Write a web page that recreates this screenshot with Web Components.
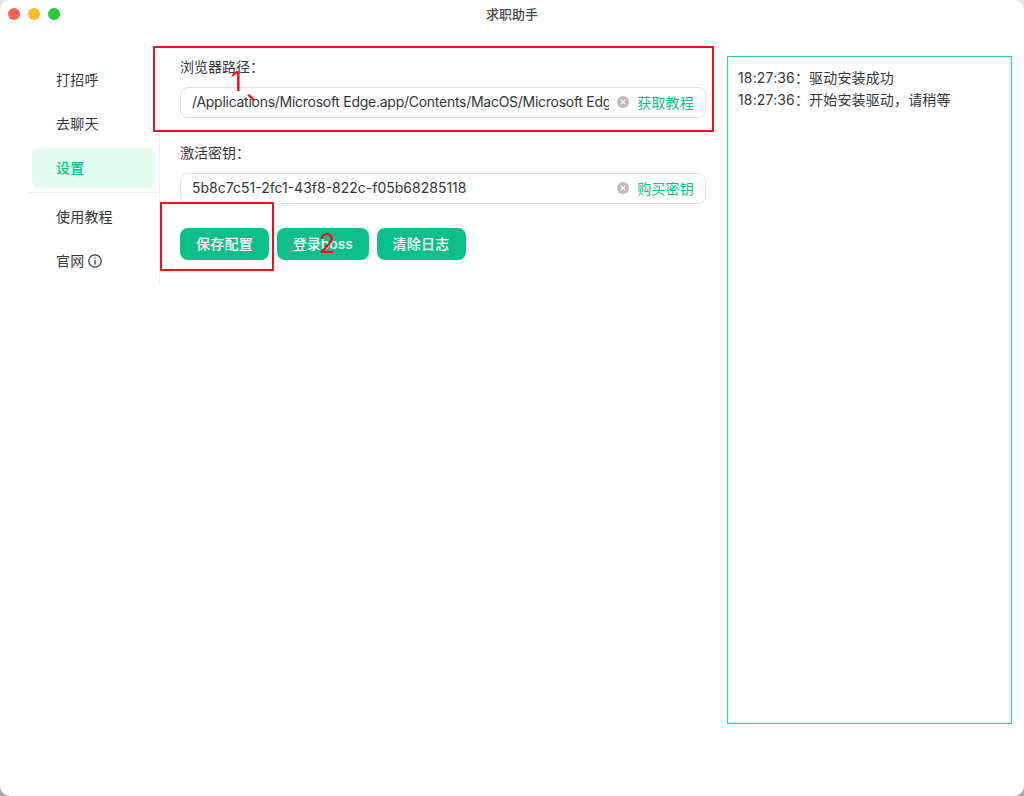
<!DOCTYPE html>
<html lang="zh">
<head>
<meta charset="utf-8">
<title>求职助手</title>
<style>
  html, body {
    margin: 0;
    height: 100%;
    background: linear-gradient(#e4e4e4, #a8a8a8);
    font-family: Inter, "Noto Sans CJK SC", sans-serif;
    font-size: 14px;
    color: #333639;
  }
</style>
</head>
<body>
<app-window>
  <side-menu slot="menu">
    <menu-item>打招呼</menu-item>
    <menu-item>去聊天</menu-item>
    <menu-item active>设置</menu-item>
    <menu-divider></menu-divider>
    <menu-item>使用教程</menu-item>
    <menu-item>官网<info-icon></info-icon></menu-item>
  </side-menu>
  <settings-form slot="content">
    <form-field label="浏览器路径：" action="获取教程" tight>/Applications/Microsoft Edge.app/Contents/MacOS/Microsoft Edge</form-field>
    <form-field label="激活密钥：" action="购买密钥">5b8c7c51-2fc1-43f8-822c-f05b68285118</form-field>
    <button-row>
      <app-button>保存配置</app-button>
      <app-button style="letter-spacing:-.1px">登录boss</app-button>
      <app-button>清除日志</app-button>
    </button-row>
  </settings-form>
  <log-panel slot="log">
    <div>18:27:36：驱动安装成功</div>
    <div>18:27:36：开始安装驱动，请稍等</div>
  </log-panel>
  <note-box slot="notes" style="left:153px;top:46px;width:561px;height:86px"></note-box>
  <note-box slot="notes" style="left:160px;top:202px;width:114px;height:69px"></note-box>
  <note-mark slot="notes" style="left:231px;top:67px">1</note-mark>
  <note-mark slot="notes" style="left:246px;top:76px">、</note-mark>
  <note-mark slot="notes" style="left:319px;top:229px">2</note-mark>
</app-window>

<script>
function define(name, css, html, setup) {
  customElements.define(name, class extends HTMLElement {
    constructor() {
      super();
      this.attachShadow({mode: 'open'});
      this.shadowRoot.innerHTML = `<style>${css}</style>${html}`;
    }
    connectedCallback() {
      if (setup) setup(this);
    }
  });
}

define('app-window', `
  :host {
    display: flex;
    flex-direction: column;
    position: relative;
    height: 796px;
    background: #fff;
    border-radius: 10px;
    overflow: hidden;
  }
  #bar {
    flex: none;
    box-sizing: border-box;
    height: 28px;
    padding-bottom: 1px;
    display: flex;
    align-items: center;
    position: relative;
    justify-content: center;
    font-size: 13px;
    font-weight: 500;
    color: #4a4a4a;
  }
  #lights {
    position: absolute;
    left: 8px;
    top: 8px;
    display: flex;
    gap: 8px;
  }
  #lights i { width: 12px; height: 12px; border-radius: 50%; }
  #main {
    flex: 1;
    display: flex;
    padding: 28px 12px 0 28px;
    min-height: 0;
  }
`, `
  <div id="bar">
    <div id="lights">
      <i style="background:#fe5f57"></i>
      <i style="background:#febc2e"></i>
      <i style="background:#28c83f"></i>
    </div>
    求职助手
  </div>
  <div id="main">
    <slot name="menu"></slot>
    <slot name="content"></slot>
    <slot name="log"></slot>
  </div>
  <slot name="notes"></slot>
`);

define('side-menu', `
  :host {
    flex: none;
    display: flex;
    flex-direction: column;
    box-sizing: border-box;
    width: 132px;
    height: 229px;
    padding: 4px 4px 0;
    border-right: 1px solid #efeff5;
  }
`, `<slot></slot>`);

define('menu-item', `
  :host {
    flex: none;
    display: flex;
    align-items: center;
    gap: 4px;
    box-sizing: border-box;
    height: 40px;
    margin-bottom: 4px;
    padding: 0 0 2px 24px;
    border-radius: 8px;
    font-size: 14px;
    letter-spacing: .2px;
    color: #333639;
  }
  :host([active]) {
    background: #e3fcf0;
    color: #13bd86;
    font-weight: 500;
  }
`, `<slot></slot>`);

define('menu-divider', `
  :host {
    display: block;
    flex: none;
    height: 1px;
    margin: 0 -4px 4px;
    background: #efeff5;
  }
`, ``);

define('info-icon', `
  :host { display: inline-flex; margin-top: 2px; }
`, `
  <svg width="14" height="14" viewBox="0 0 14 14" fill="none" stroke="#333639">
    <circle cx="7" cy="7" r="6.2" stroke-width="1.2"/>
    <path d="M7 6v4.4" stroke-width="1.3"/>
    <circle cx="7" cy="4" r=".8" fill="#333639" stroke="none"/>
  </svg>
`);

define('settings-form', `
  :host {
    flex: none;
    display: flex;
    flex-direction: column;
    width: 526px;
    padding: 0 21px 0 20px;
  }
`, `<slot></slot>`);

define('form-field', `
  :host {
    display: block;
    height: 86px;
  }
  :host([tight]) #value { letter-spacing: -.27px; }
  #label {
    height: 31px;
    box-sizing: border-box;
    line-height: 22px;
    color: #333639;
  }
  #box {
    display: flex;
    align-items: center;
    box-sizing: border-box;
    height: 31px;
    padding: 0 11px 2px;
    border: 1px solid #e0e0e6;
    border-radius: 8px;
  }
  #value {
    flex: 1;
    min-width: 0;
    overflow: hidden;
    white-space: nowrap;
  }
  #clear {
    flex: none;
    width: 12px;
    height: 12px;
    margin: 0 8px;
  }
  #action {
    flex: none;
    letter-spacing: .2px;
    color: #13bd86;
  }
`, `
  <div id="label"></div>
  <div id="box">
    <div id="value"><slot></slot></div>
    <svg id="clear" viewBox="0 0 12 12">
      <circle cx="6" cy="6" r="6" fill="#bcbcbc"/>
      <path d="M4 4l4 4M8 4l-4 4" stroke="#fff" stroke-width="1.1"/>
    </svg>
    <div id="action"></div>
  </div>
`, el => {
  el.shadowRoot.getElementById('label').textContent = el.getAttribute('label');
  el.shadowRoot.getElementById('action').textContent = el.getAttribute('action');
});

define('button-row', `
  :host {
    display: flex;
    gap: 8px;
  }
`, `<slot></slot>`);

define('app-button', `
  :host {
    display: flex;
    align-items: center;
    box-sizing: border-box;
    height: 32px;
    padding: 0 16px 2px;
    border-radius: 8px;
    background: #0fbf89;
    color: #fff;
    font-size: 14px;
    font-weight: 500;
    letter-spacing: .25px;
  }
`, `<slot></slot>`);

define('log-panel', `
  :host {
    flex: none;
    display: block;
    box-sizing: border-box;
    width: 285px;
    height: 668px;
    padding: 10px 10px;
    border: 1px solid #35d0a5;
    box-shadow: inset 0 0 0 1px rgba(53, 208, 165, .2);
    line-height: 22px;
    letter-spacing: .15px;
    color: #333639;
    white-space: nowrap;
  }
`, `<slot></slot>`);

define('note-box', `
  :host {
    position: absolute;
    display: block;
    box-sizing: border-box;
    border: 2px solid #e8131f;
  }
`, ``);

define('note-mark', `
  :host {
    position: absolute;
    display: block;
    font-size: 27px;
    line-height: 30px;
    color: #e8131f;
  }
`, `<slot></slot>`);
</script>
</body>
</html>
